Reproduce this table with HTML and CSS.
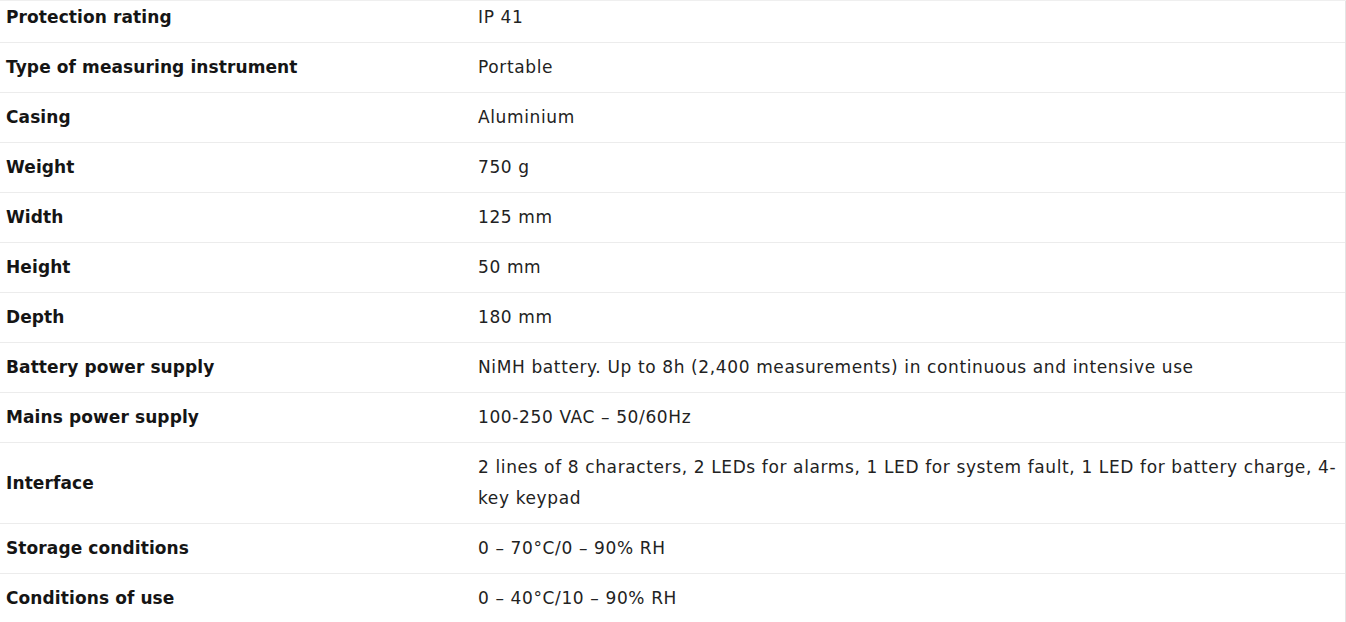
FILE: index.html
```html
<!DOCTYPE html>
<html lang="en">
<head>
<meta charset="utf-8">
<title>Specifications</title>
<link rel="stylesheet" href="styles.css">
</head>
<body>
<div class="specs">
<table class="spec-table">
<tbody>
<tr><th>Protection rating</th><td>IP 41</td></tr>
<tr><th>Type of measuring instrument</th><td>Portable</td></tr>
<tr><th>Casing</th><td>Aluminium</td></tr>
<tr><th>Weight</th><td>750 g</td></tr>
<tr><th>Width</th><td>125 mm</td></tr>
<tr><th>Height</th><td>50 mm</td></tr>
<tr><th>Depth</th><td>180 mm</td></tr>
<tr><th>Battery power supply</th><td>NiMH battery. Up to 8h (2,400 measurements) in continuous and intensive use</td></tr>
<tr><th>Mains power supply</th><td>100-250 VAC – 50/60Hz</td></tr>
<tr><th>Interface</th><td>2 lines of 8 characters, 2 LEDs for alarms, 1 LED for system fault, 1 LED for battery charge, 4-key keypad</td></tr>
<tr><th>Storage conditions</th><td>0 – 70°C/0 – 90% RH</td></tr>
<tr><th>Conditions of use</th><td>0 – 40°C/10 – 90% RH</td></tr>
</tbody>
</table>
</div>
</body>
</html>
```

FILE: styles.css
```css
html, body {
  margin: 0;
  padding: 0;
  background: #ffffff;
}
body {
  font-family: "DejaVu Sans", "Liberation Sans", sans-serif;
  color: #1b1b1b;
  overflow: hidden;
  border-top: 1px solid #efefef;
}
.specs {
  width: 1345px;
  margin-top: -8px;
  border-right: 1px solid #e4e4e4;
}
.spec-table {
  width: 100%;
  border-collapse: collapse;
  font-size: 17px;
  line-height: 31px;
}
.spec-table tr {
  border-bottom: 1px solid #ececec;
}
.spec-table th,
.spec-table td {
  text-align: left;
  vertical-align: middle;
  padding: 9px 6px 9px;
}
.spec-table th {
  width: 460px;
  font-weight: 700;
  color: #151515;
  letter-spacing: 0.1px;
}
.spec-table td {
  font-weight: 400;
  color: #222222;
  letter-spacing: 0.62px;
  padding-right: 2px;
}
```
